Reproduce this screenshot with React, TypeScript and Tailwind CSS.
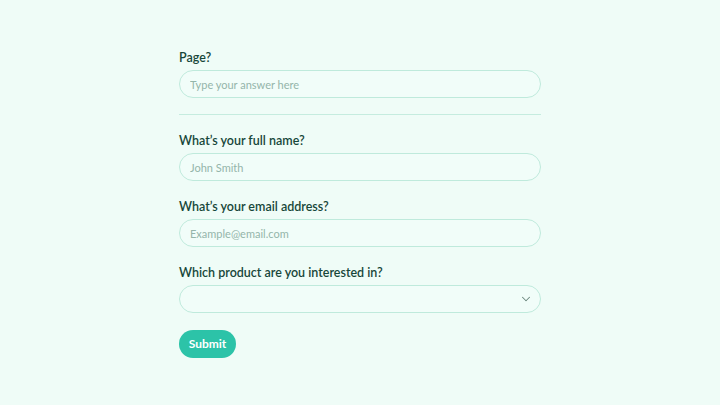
import { ChevronDown } from 'lucide-react';

const font = { fontFamily: 'Lato, "Noto Sans", sans-serif' };

const labelCls = 'text-[12.5px] font-semibold text-[#17473a] leading-[13px] mb-[6px]';
const boxCls = 'h-[28px] w-full rounded-full border border-[#bfeadc] bg-[#f1fdf9]';

function Field({ label, placeholder }: { label: string; placeholder: string }) {
  return (
    <div className="flex flex-col">
      <label className={labelCls}>{label}</label>
      <input
        placeholder={placeholder}
        className={`${boxCls} px-[10px] text-[11px] text-[#17473a] placeholder:text-[#94b5aa] outline-none`}
      />
    </div>
  );
}

export default function App() {
  return (
    <div className="min-h-screen w-full bg-[#effcf7] flex justify-center" style={font}>
      <form className="w-[362px] pt-[51px] flex flex-col">
        <Field label="Page?" placeholder="Type your answer here" />
        <div className="h-px bg-[#c5ecdf] mt-[16px] mb-[19px]" />
        <div className="flex flex-col gap-[19px]">
          <Field label="What’s your full name?" placeholder="John Smith" />
          <Field label="What’s your email address?" placeholder="Example@email.com" />
          <div className="flex flex-col">
            <label className={labelCls}>Which product are you interested in?</label>
            <div className={`${boxCls} flex items-center justify-end pr-[7px]`}>
              <ChevronDown size={14} strokeWidth={1.75} className="text-[#6a857c]" />
            </div>
          </div>
        </div>
        <div className="mt-[17px]">
          <button
            type="button"
            className="h-[28px] w-[57px] rounded-full bg-[#2cc3a8] text-white text-[12px] font-bold"
          >
            Submit
          </button>
        </div>
      </form>
    </div>
  );
}
